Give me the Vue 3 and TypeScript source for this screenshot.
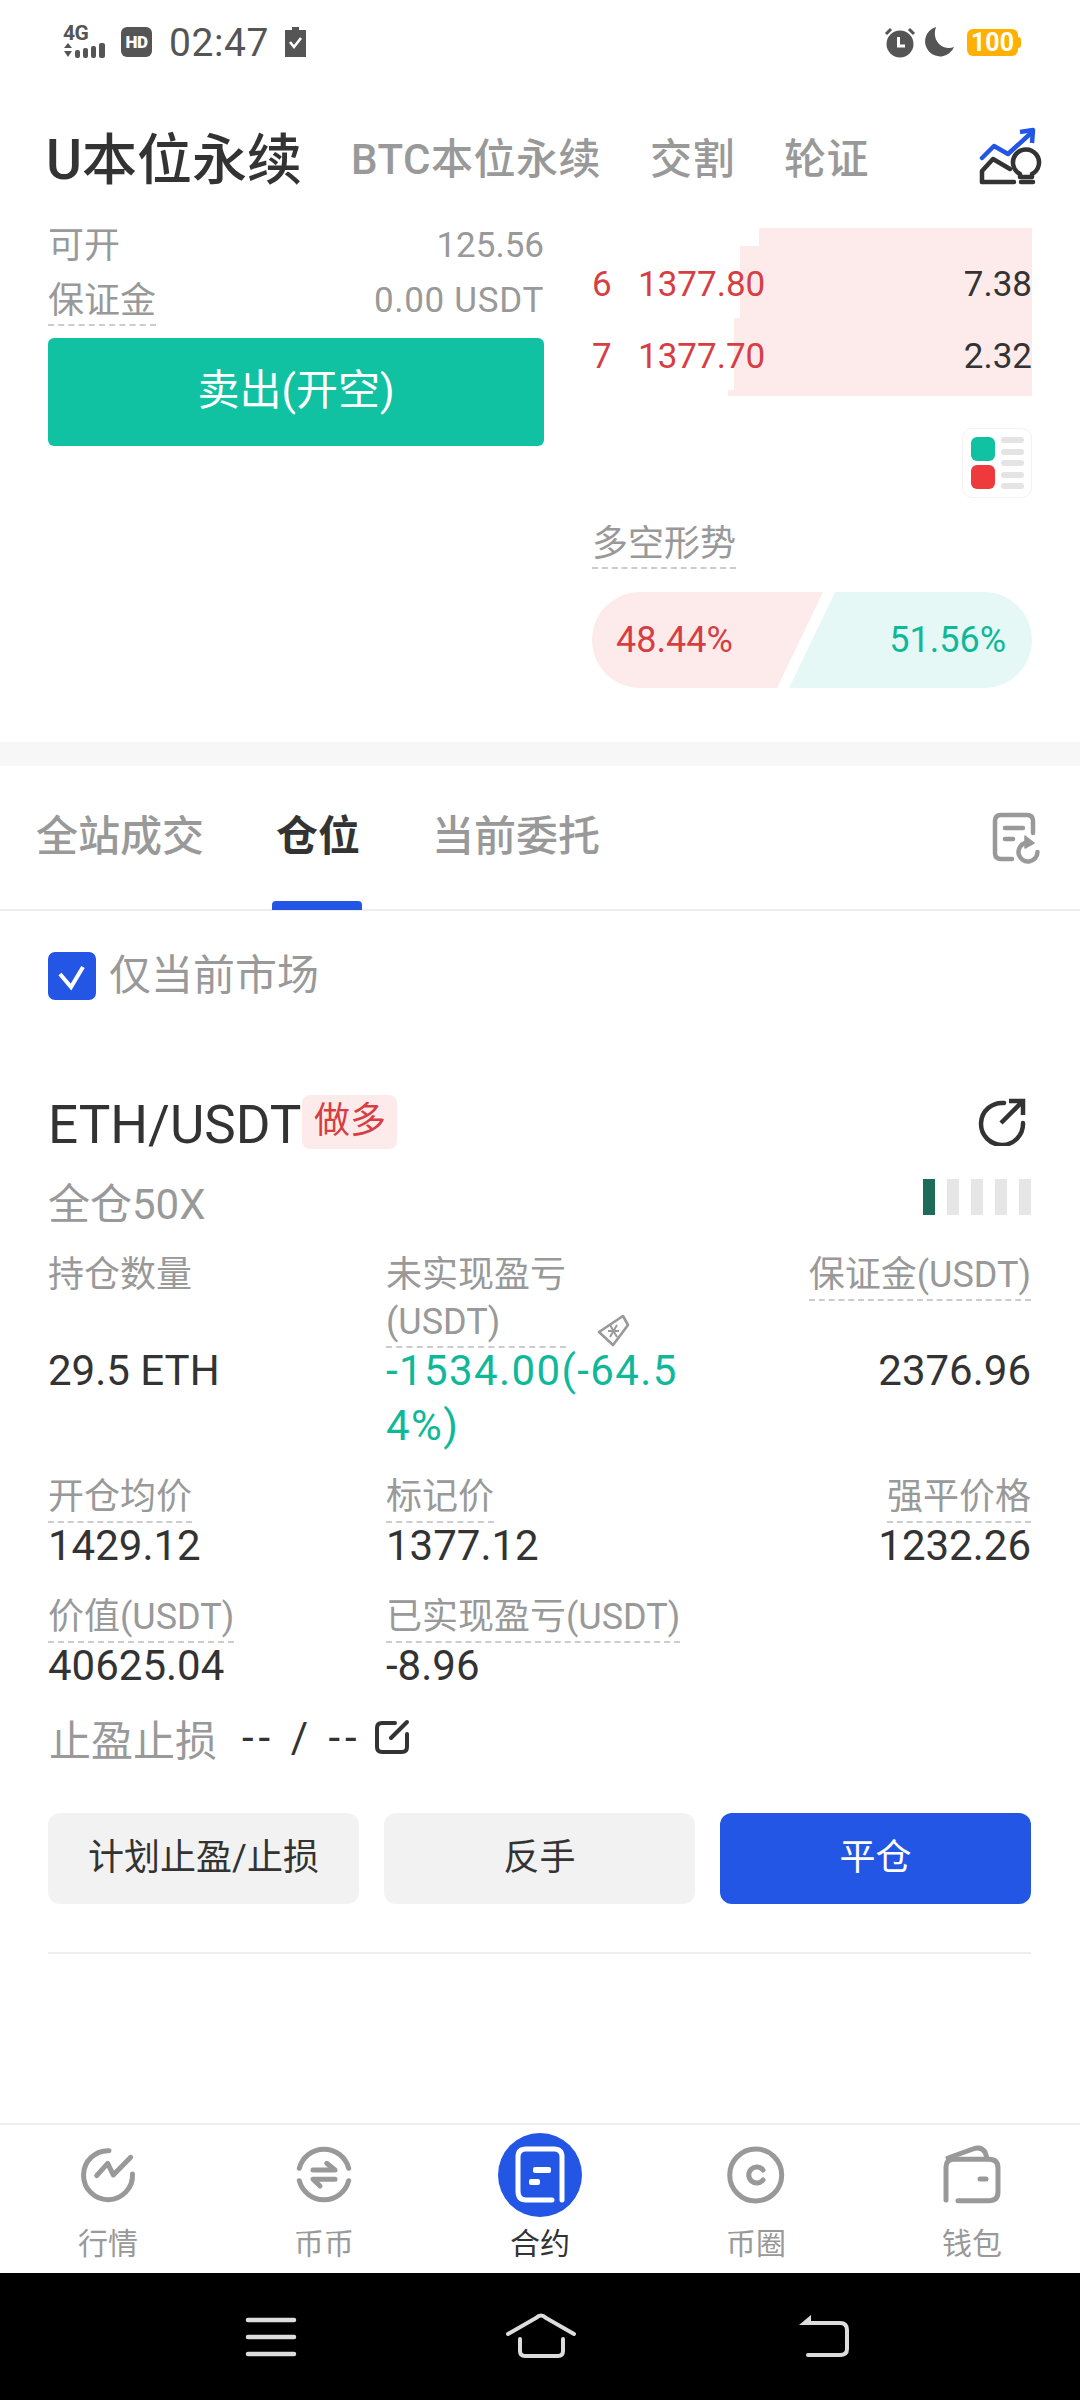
<script setup lang="ts">
interface BookRow { level: number; price: string; qty: string }
interface Cell { label: string[]; value: string; tone?: string; dashed?: boolean }
interface NavItem { key: string; label: string }

const markets = ['BTC本位永续', '交割', '轮证']
const book: BookRow[] = [
  { level: 6, price: '1377.80', qty: '7.38' },
  { level: 7, price: '1377.70', qty: '2.32' }
]
// depth strips behind the order book: height / width in px
const depth = [
  { h: 18, w: 273 },
  { h: 72, w: 292 },
  { h: 72, w: 298 },
  { h: 6, w: 304 }
]
const rows: Cell[][] = [
  [
    { label: ['持仓数量'], value: '29.5 ETH' },
    { label: ['未实现盈亏', '(USDT)'], value: '-1534.00(-64.54%)', tone: 'up', dashed: true },
    { label: ['保证金(USDT)'], value: '2376.96', dashed: true }
  ],
  [
    { label: ['开仓均价'], value: '1429.12', dashed: true },
    { label: ['标记价'], value: '1377.12', dashed: true },
    { label: ['强平价格'], value: '1232.26', dashed: true }
  ],
  [
    { label: ['价值(USDT)'], value: '40625.04', dashed: true },
    { label: ['已实现盈亏(USDT)'], value: '-8.96', dashed: true }
  ]
]
const nav: NavItem[] = [
  { key: 'market', label: '行情' },
  { key: 'spot', label: '币币' },
  { key: 'contract', label: '合约' },
  { key: 'circle', label: '币圈' },
  { key: 'wallet', label: '钱包' }
]
</script>

<template>
  <div class="page">
    <!-- status bar -->
    <div class="status">
      <div class="net">
        <span class="net-label">4G</span>
        <svg class="net-sig" width="48" height="18" viewBox="0 0 48 18">
          <path d="M1 7 5 2 9 7ZM1 10H9L5 16Z" fill="#555" />
          <rect x="12" y="9" width="5" height="8" rx="2" fill="#555" />
          <rect x="20" y="7" width="5" height="10" rx="2" fill="#555" />
          <rect x="28" y="5" width="5" height="12" rx="2" fill="#555" />
          <rect x="36" y="2" width="6" height="15" rx="2" fill="#555" />
        </svg>
      </div>
      <span class="hd">HD</span>
      <span class="clock">02:47</span>
      <svg width="21" height="30" viewBox="0 0 21 30">
        <path d="M6 3H7V0H14V3H15H21V30H0V3Z" fill="#555" />
        <path d="M5 15 9 20 16 11" fill="none" stroke="#fff" stroke-width="2.6" />
      </svg>
      <div class="status-right">
        <svg width="32" height="31" viewBox="0 0 32 31">
          <circle cx="16" cy="17" r="13.5" fill="#555" />
          <path d="M2 7 7 2M30 7 25 2" stroke="#555" stroke-width="3" />
          <path d="M14.5 10V19H21" fill="none" stroke="#fff" stroke-width="3" />
        </svg>
        <svg width="32" height="30" viewBox="0 0 32 30">
          <path d="M13 0A15 15 0 1 0 31 20C20 24 8 14 13 0Z" fill="#555" />
        </svg>
        <div class="battery"><span>100</span></div>
      </div>
    </div>

    <!-- market switch -->
    <div class="markets">
      <span class="market-on">U本位永续</span>
      <span v-for="m in markets" :key="m" class="market">{{ m }}</span>
      <svg class="bulb" width="64" height="60" viewBox="0 0 64 60">
        <path d="M4 31 16 19 30 27 52 7" fill="none" stroke="#2456e6" stroke-width="4.5" stroke-linecap="round" stroke-linejoin="round" />
        <path d="M42 5 55 3 54 16" fill="none" stroke="#2456e6" stroke-width="4.5" stroke-linejoin="round" />
        <path d="M4 55V44L15 32 32 42" fill="none" stroke="#333" stroke-width="4.5" stroke-linecap="round" stroke-linejoin="round" />
        <path d="M4 55H36M43 55H55" fill="none" stroke="#333" stroke-width="4.5" stroke-linecap="round" />
        <path d="M42 47A13 13 0 1 1 54 47V50H42Z" fill="none" stroke="#333" stroke-width="4.5" stroke-linejoin="round" />
      </svg>
    </div>

    <!-- order panel -->
    <section class="trade">
      <div class="trade-left">
        <div class="line"><span>可开</span><span class="num">125.56</span></div>
        <div class="line line-2"><span class="dash">保证金</span><span class="num num-wide">0.00 USDT</span></div>
        <div class="sell">卖出(开空)</div>
      </div>
      <div class="trade-right">
        <div class="book">
          <div class="depth">
            <div v-for="(d, i) in depth" :key="i" class="strip" :style="{ height: d.h + 'px', width: d.w + 'px' }"></div>
          </div>
          <div v-for="r in book" :key="r.level" class="book-row">
            <span class="level">{{ r.level }}</span>
            <span class="price">{{ r.price }}</span>
            <span class="qty">{{ r.qty }}</span>
          </div>
        </div>
        <div class="layout-btn">
          <div class="swatches"><i class="sw-green"></i><i class="sw-red"></i></div>
          <div class="ticks"><i v-for="n in 5" :key="n"></i></div>
        </div>
        <div class="trend-title"><span class="dash">多空形势</span></div>
        <div class="ratio">
          <div class="ratio-long">48.44%</div>
          <div class="ratio-short">51.56%</div>
        </div>
      </div>
    </section>

    <div class="band"></div>

    <!-- tabs -->
    <div class="tabs">
      <span class="tab">全站成交</span>
      <span class="tab tab-on">仓位</span>
      <span class="tab">当前委托</span>
      <svg class="tab-icon" width="52" height="56" viewBox="0 0 52 56">
        <path d="M43 23V11Q43 5 37 5H11Q5 5 5 11V43Q5 49 11 49H22" fill="none" stroke="#999" stroke-width="4.5" stroke-linecap="round" />
        <path d="M15 18H33M15 29H23" stroke="#999" stroke-width="4.5" stroke-linecap="round" />
        <path d="M47.5 42A9.5 9.5 0 1 1 35 33" fill="none" stroke="#999" stroke-width="4.5" stroke-linecap="round" />
        <path d="M35 26 44 33 35 38Z" fill="#999" stroke="#999" stroke-width="1.5" stroke-linejoin="round" />
      </svg>
    </div>

    <div class="only">
      <svg width="48" height="48" viewBox="0 0 48 48">
        <rect width="48" height="48" rx="7" fill="#2456e6" />
        <path d="M12 22 23 35 35 15" fill="none" stroke="#fff" stroke-width="4" />
      </svg>
      <span>仅当前市场</span>
    </div>

    <!-- position card -->
    <section class="position">
      <div class="pos-head">
        <span class="symbol">ETH/USDT</span>
        <span class="side">做多</span>
        <svg class="share" width="48" height="48" viewBox="0 0 48 48">
          <path d="M26 5A21 21 0 1 0 45 25" fill="none" stroke="#333" stroke-width="4.5" stroke-linecap="round" />
          <path d="M23 25 44 4M31 3H45V17" fill="none" stroke="#333" stroke-width="4.5" />
        </svg>
      </div>
      <div class="pos-sub">
        <span>全仓50X</span>
        <div class="adl"><i v-for="n in 5" :key="n" :class="{ on: n === 1 }"></i></div>
      </div>
      <div class="grid">
        <template v-for="(row, ri) in rows" :key="ri">
          <div
            v-for="(c, ci) in row"
            :key="c.value + '-l'"
            class="label"
            :class="{ dashed: c.dashed, right: ci === 2 }"
            :style="{ gridRow: ri * 2 + 1, gridColumn: ci + 1 }"
          >
            <template v-for="(t, ti) in c.label" :key="t">{{ t }}<br v-if="ti < c.label.length - 1" /></template>
            <svg v-if="ri === 0 && ci === 1" class="tag" width="36" height="36" viewBox="0 0 36 36">
              <path d="M28 3 33 12 18 32 4 19Z" fill="none" stroke="#999" stroke-width="2.6" stroke-linejoin="round" />
              <path d="M13 18 24 18M15 12 22 24M22 12 15 24" stroke="#999" stroke-width="2" />
            </svg>
          </div>
          <div
            v-for="(c, ci) in row"
            :key="c.value"
            class="value"
            :class="[c.tone, { right: ci === 2 }]"
            :style="{ gridRow: ri * 2 + 2, gridColumn: ci + 1 }"
          >{{ c.value }}</div>
        </template>
      </div>
      <div class="tpsl">
        <span class="tpsl-label">止盈止损</span>
        <span class="tpsl-val">-- / --</span>
        <svg width="36" height="36" viewBox="0 0 36 36">
          <path d="M21 4H8Q3 4 3 9V28Q3 33 8 33H28Q33 33 33 28V15" fill="none" stroke="#333" stroke-width="4" stroke-linecap="round" />
          <path d="M17 19 33 3" stroke="#333" stroke-width="4" stroke-linecap="round" />
        </svg>
      </div>
      <div class="actions">
        <div class="act">计划止盈/止损</div>
        <div class="act">反手</div>
        <div class="act act-blue">平仓</div>
      </div>
      <div class="rule"></div>
    </section>

    <div class="spacer"></div>

    <!-- bottom tabs -->
    <nav class="nav">
      <div v-for="n in nav" :key="n.key" class="nav-item" :class="{ active: n.key === 'contract' }">
        <div class="nav-icon">
          <svg v-if="n.key === 'market'" width="56" height="58" viewBox="0 0 56 58">
            <path d="M29 4.7A24.5 24.5 0 1 0 52.5 28" fill="none" stroke="#999" stroke-width="5" stroke-linecap="round" />
            <path d="M16.7 29.7 27.7 17.3 33.3 29 50.7 11.3" fill="none" stroke="#999" stroke-width="5" stroke-linejoin="round" stroke-linecap="round" />
          </svg>
          <svg v-else-if="n.key === 'spot'" width="58" height="58" viewBox="0 0 58 58">
            <path d="M4.3 22.3A25.5 25.5 0 0 1 53.7 22.3M4.3 34.7A25.5 25.5 0 0 0 53.7 34.7" fill="none" stroke="#999" stroke-width="5" stroke-linecap="round" />
            <path d="M18 24H40L31.7 17.3M40 33.3H18L25 40" fill="none" stroke="#999" stroke-width="5" stroke-linecap="round" stroke-linejoin="round" />
          </svg>
          <svg v-else-if="n.key === 'contract'" class="contract" width="84" height="84" viewBox="0 0 84 84">
            <circle cx="42" cy="42" r="42" fill="#2456e6" />
            <path d="M64 67V24Q64 16 56 16H28Q20 16 20 24V58Q20 67 28 67H54" fill="none" stroke="#fff" stroke-width="5" stroke-linecap="round" />
            <rect x="35" y="34" width="18" height="6" rx="2" fill="#fff" />
            <rect x="31" y="46" width="11" height="6" rx="2" fill="#fff" />
          </svg>
          <svg v-else-if="n.key === 'circle'" width="60" height="60" viewBox="0 0 60 60">
            <circle cx="29.7" cy="30" r="26" fill="none" stroke="#999" stroke-width="5" />
            <path d="M37 25A8 8 0 1 0 37 35" fill="none" stroke="#999" stroke-width="5" stroke-linecap="round" />
          </svg>
          <svg v-else width="60" height="60" viewBox="0 0 60 60">
            <path d="M4 55V22Q4 14.3 12 14.3H47Q56 14.3 56 23V47Q56 55.7 47 55.7H16" fill="none" stroke="#999" stroke-width="5" stroke-linecap="round" />
            <path d="M6 13 31 4Q39 1 43 7L45 13" fill="none" stroke="#999" stroke-width="5" stroke-linecap="round" />
            <path d="M38 34H44" stroke="#999" stroke-width="5" stroke-linecap="round" />
          </svg>
        </div>
        <span class="nav-label">{{ n.label }}</span>
      </div>
    </nav>

    <!-- system bar -->
    <div class="sysbar">
      <svg width="1080" height="127" viewBox="0 0 1080 127">
        <path d="M248 47H294M248 64H294M248 81H294" stroke="#ddd" stroke-width="4.5" stroke-linecap="round" />
        <path d="M508 61 536 45Q541 40 546 45L574 61" fill="none" stroke="#ddd" stroke-width="4" stroke-linecap="round" />
        <path d="M520 66V78Q520 83 525 83H558Q563 83 563 78V66" fill="none" stroke="#ddd" stroke-width="4" stroke-linecap="round" />
        <path d="M807 50H840Q847 50 847 57V76Q847 82 840 82H808" fill="none" stroke="#ddd" stroke-width="4" stroke-linecap="round" />
        <path d="M811 42 799 52H811Z" fill="#ddd" />
      </svg>
    </div>
  </div>
</template>

<style>
html, body { background: #fff; }
</style>

<style scoped>
.page {
  width: 1080px; height: 2400px; display: flex; flex-direction: column; background: #fff;
  font-family: Roboto, "Noto Sans CJK SC", sans-serif; color: #333; overflow: hidden;
}

.status { height: 84px; box-sizing: border-box; display: flex; align-items: flex-start; padding: 27px 62px 0 63px; color: #555; }
.net { width: 50px; display: flex; flex-direction: column; margin-top: -3px; }
.net-label { font-size: 21px; line-height: 18px; font-weight: 700; letter-spacing: -0.5px; }
.net-sig { margin-top: -1px; }
.hd { width: 31px; height: 30px; margin-left: 8px; background: #555; color: #fff; border-radius: 6px; font-size: 17px; font-weight: 900; line-height: 30px; text-align: center; letter-spacing: -0.5px; }
.clock { font-size: 39px; line-height: 32px; margin: 0 16px 0 17px; letter-spacing: 0.6px; }
.status-right { margin-left: auto; display: flex; align-items: flex-start; gap: 7px; }
.battery { width: 51px; height: 27px; margin: 2px 0 0 5px; background: #ffb000; border-radius: 6px; color: #fff; font-size: 25px; line-height: 27px; font-weight: 700; text-align: center; position: relative; }
.battery::after { content: ''; position: absolute; right: -3px; top: 8px; width: 3px; height: 11px; border-radius: 0 3px 3px 0; background: #ffb000; }

.markets { height: 138px; box-sizing: border-box; padding: 14px 38px 0 46px; display: flex; align-items: center; font-weight: 500; }
.market-on { font-size: 55px; line-height: 60px; width: 305px; }
.market { font-size: 42px; line-height: 60px; color: #999; margin-right: 49px; letter-spacing: 0.5px; }
.bulb { margin-left: auto; margin-top: -6px; }

.trade { display: flex; gap: 48px; padding: 0 48px 54px; height: 520px; box-sizing: border-box; }
.trade-left { width: 496px; }
.line { display: flex; justify-content: space-between; font-size: 36px; line-height: 48px; color: #999; }
.line-2 { margin-top: 8px; align-items: flex-start; line-height: 46px; }
.dash { border-bottom: 2px dashed #ccc; display: inline-block; }
.num { font-size: 35px; }
.num-wide { letter-spacing: 0.7px; }
.sell { margin-top: 12px; height: 108px; background: #10c2a2; border-radius: 6px; color: #fff; font-size: 42px; line-height: 106px; text-align: center; }

.trade-right { width: 440px; display: flex; flex-direction: column; }
.book { position: relative; margin-top: 6px; height: 168px; box-sizing: border-box; padding-top: 20px; }
.depth { position: absolute; inset: 0; display: flex; flex-direction: column; align-items: flex-end; }
.strip { background: #fdebeb; flex: none; }
.book-row { position: relative; height: 72px; display: flex; align-items: center; font-size: 35px; color: #d63e44; }
.level { width: 46px; }
.qty { margin-left: auto; color: #333; }
.layout-btn { align-self: flex-end; margin-top: 32px; width: 70px; height: 70px; box-sizing: border-box; border: 1px solid #f6f0f0; border-radius: 10px; padding: 8px 7px 8px 8px; display: flex; justify-content: space-between; }
.swatches { display: flex; flex-direction: column; justify-content: space-between; }
.swatches i { display: block; width: 24px; height: 24px; border-radius: 6px; }
.sw-green { background: #10c2a2; }
.sw-red { background: #ee3a3d; }
.ticks { display: flex; flex-direction: column; justify-content: space-between; }
.ticks i { display: block; width: 23px; height: 6px; border-radius: 3px; background: #e4e4e4; }
.trend-title { margin-top: 20px; font-size: 36px; line-height: 48px; color: #999; height: 50px; }
.trend-title .dash { height: 46px; padding-top: 3px; line-height: 46px; box-sizing: content-box; }
.ratio { margin-top: 24px; display: flex; height: 96px; }
.ratio-long, .ratio-short { font-size: 36px; line-height: 96px; }
.ratio-long { width: 231px; flex: none; box-sizing: border-box; padding-left: 24px; background: #fdebeb; color: #d63e44; border-radius: 48px 0 0 48px; clip-path: polygon(0 0, 100% 0, 185px 100%, 0 100%); }
.ratio-short { flex: 1; margin-left: -34px; box-sizing: border-box; padding-right: 26px; text-align: right; background: #e6f8f5; color: #10b89a; border-radius: 0 48px 48px 0; clip-path: polygon(46px 0, 100% 0, 100% 100%, 0 100%); }

.band { height: 24px; background: #f7f7f7; flex: none; }

.tabs { height: 145px; flex: none; box-sizing: border-box; border-bottom: 2px solid #ededed; padding: 0 38px 0 36px; display: flex; align-items: flex-start; gap: 72px; }
.tab { position: relative; font-size: 42px; line-height: 142px; color: #999; font-weight: 500; }
.tab-on { color: #333; font-weight: 700; }
.tab-on::after { content: ''; position: absolute; left: -4px; right: -2px; top: 135px; height: 9px; border-radius: 4px 4px 0 0; background: #2456e6; }
.tab-icon { margin: 44px 0 0 auto; }

.only { margin: 41px 48px 0; height: 48px; display: flex; align-items: center; gap: 13px; font-size: 42px; line-height: 44px; color: #999; }
.only span { margin-top: -1px; }

.position { padding: 0 49px 0 48px; }
.pos-head { margin-top: 95px; height: 54px; display: flex; align-items: center; }
.symbol { font-size: 53px; line-height: 54px; margin: 5px 0 0; }
.side { margin-left: 1px; width: 95px; height: 54px; background: #fdebeb; border-radius: 8px; color: #d63e44; font-size: 36px; line-height: 52px; text-align: center; }
.share { margin-left: auto; margin-right: 5px; }
.pos-sub { margin-top: 29px; display: flex; justify-content: space-between; font-size: 42px; line-height: 48px; color: #999; }
.pos-sub span { padding-top: 3px; }
.adl { display: flex; gap: 12px; margin-top: 1px; }
.adl i { display: block; width: 12px; height: 36px; background: #e6e6e6; }
.adl i.on { background: #1e6b5a; }
.grid { margin-top: 21px; display: grid; grid-template-columns: 338px 295px 1fr; }
.label { position: relative; font-size: 36px; line-height: 47px; padding-top: 2px; color: #999; justify-self: start; align-self: start; border-bottom: 2px solid transparent; margin-top: 19px; white-space: nowrap; }
.grid > .label:nth-child(-n+3) { margin-top: 0; }
.label.dashed { border-bottom: 2px dashed #ccc; }
.label.right { justify-self: end; }
.value { font-size: 42px; line-height: 55px; margin-top: -5px; word-break: break-all; }
.value.up { color: #10b89a; letter-spacing: 1.4px; }
.value.right { text-align: right; }
.tag { position: absolute; left: 209px; top: 63px; }
.tpsl { margin-top: 20px; height: 48px; display: flex; align-items: center; }
.tpsl-label { font-size: 42px; color: #999; margin-left: 1px; }
.tpsl-val { font-size: 42px; letter-spacing: 5px; margin-left: 25px; width: 132px; white-space: nowrap; }
.actions { margin-top: 52px; display: flex; gap: 25px; }
.act { flex: 1; height: 91px; border-radius: 12px; background: #f2f2f2; font-size: 36px; line-height: 91px; text-align: center; }
.act-blue { background: #2456e6; color: #fff; }
.rule { margin-top: 48px; height: 2px; background: #eee; }

.spacer { flex: 1; }

.nav { height: 150px; flex: none; box-sizing: border-box; border-top: 2px solid #eee; display: flex; justify-content: space-between; padding: 0 72px; }
.nav-item { width: 72px; display: flex; flex-direction: column; align-items: center; position: relative; }
.nav-icon { height: 100px; display: flex; align-items: center; justify-content: center; }
.nav-icon svg { flex: none; }
.nav-label { font-size: 30px; line-height: 44px; color: #999; margin-top: -3px; }
.active .nav-label { color: #333; }

.sysbar { height: 127px; flex: none; background: #000; }
.sysbar svg { display: block; }
</style>
